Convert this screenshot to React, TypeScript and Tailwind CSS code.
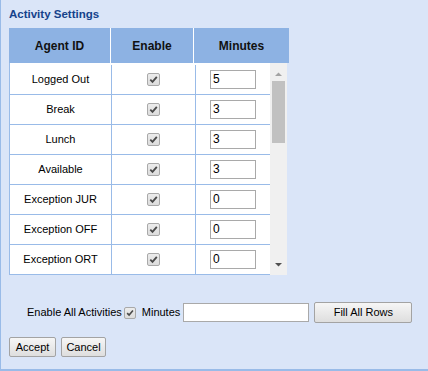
import React from "react";

const rows = [
  { name: "Logged Out", min: "5" },
  { name: "Break", min: "3" },
  { name: "Lunch", min: "3" },
  { name: "Available", min: "3" },
  { name: "Exception JUR", min: "0" },
  { name: "Exception OFF", min: "0" },
  { name: "Exception ORT", min: "0" },
];

function Check({ size = 13 }: { size?: number }) {
  return (
    <span
      className="flex items-center justify-center border border-[#a9a9a9] rounded-[2px] bg-gradient-to-b from-[#ececec] to-[#dcdcdc]"
      style={{ width: size, height: size }}
    >
      <svg width={size - 4} height={size - 4} viewBox="0 0 9 9">
        <path d="M1.3 4.6 L3.5 6.9 L7.8 1.8" fill="none" stroke="#4a4a4a" strokeWidth="1.8" />
      </svg>
    </span>
  );
}

function Btn({ label, w }: { label: string; w: string }) {
  return (
    <button
      className={`${w} h-[20px] flex items-center justify-center border border-[#a3a3a3] rounded-[2px] bg-gradient-to-b from-[#f6f6f6] to-[#dedede] text-[11px] text-black`}
    >
      {label}
    </button>
  );
}

export default function App() {
  return (
    <div className="w-[428px] h-[371px] bg-[#dae5f8] border-l border-b-2 border-[#99bbe8] font-['Liberation_Sans',Arial,sans-serif] text-black">
      <div className="h-[28px] pl-[8px] pt-[6px]">
        <div className="text-[11.5px] leading-[16px] font-bold text-[#15428b]">Activity Settings</div>
      </div>
      <div className="ml-[8px] w-[280px]">
        <div className="flex h-[35px] bg-[#8db2e3] text-[12px] font-bold text-[#111]">
          <div className="w-[102px] border-r border-white flex items-center justify-center">Agent ID</div>
          <div className="w-[83px] border-r border-white flex items-center justify-center">Enable</div>
          <div className="w-[95px] flex items-center justify-center">Minutes</div>
        </div>
        <div className="flex w-[278px] h-[212px] border-l border-[#99bbe8] bg-white">
          <div className="w-[260px] pt-[2px]">
            {rows.map((r) => (
              <div key={r.name} className="flex h-[30px] border-b border-[#99bbe8] text-[11px]">
                <div className="w-[102px] border-r border-[#99bbe8] flex items-center justify-center">{r.name}</div>
                <div className="w-[84px] border-r border-[#99bbe8] flex items-center justify-center">
                  <Check />
                </div>
                <div className="w-[74px] flex items-center pl-[14px]">
                  <div className="w-[46px] h-[19px] border border-[#a9a9a9] bg-white text-[12px] leading-[17px] pl-[2px]">{r.min}</div>
                </div>
              </div>
            ))}
          </div>
          <div className="w-[17px] h-full bg-[#f0f0f0] flex flex-col items-center">
            <svg width="9" height="18" viewBox="0 0 9 18" className="mt-[0px]">
              <path d="M1 13 L4.5 9.5 L8 13 Z" fill="#a3a3a3" />
            </svg>
            <div className="w-[13px] h-[62px] bg-[#c1c1c1]" />
            <div className="flex-1" />
            <svg width="9" height="18" viewBox="0 0 9 18">
              <path d="M1 6 L8 6 L4.5 9.5 Z" fill="#505050" />
            </svg>
          </div>
        </div>
      </div>
      <div className="mt-[27px] pl-[26px] flex items-center h-[21px] text-[11px]">
        <span>Enable All Activities</span>
        <span className="ml-[2px]">
          <Check size={12} />
        </span>
        <span className="ml-[6px]">Minutes</span>
        <div className="ml-[3px] w-[126px] h-[19px] border border-[#a9a9a9] bg-white" />
        <button className="ml-[5px] w-[98px] h-[21px] flex items-center justify-center border border-[#a3a3a3] rounded-[2px] bg-gradient-to-b from-[#f6f6f6] to-[#dedede] text-[11px]">
          Fill All Rows
        </button>
      </div>
      <div className="mt-[14px] pl-[8px] flex gap-[5px]">
        <Btn label="Accept" w="w-[47px]" />
        <Btn label="Cancel" w="w-[45px]" />
      </div>
    </div>
  );
}
